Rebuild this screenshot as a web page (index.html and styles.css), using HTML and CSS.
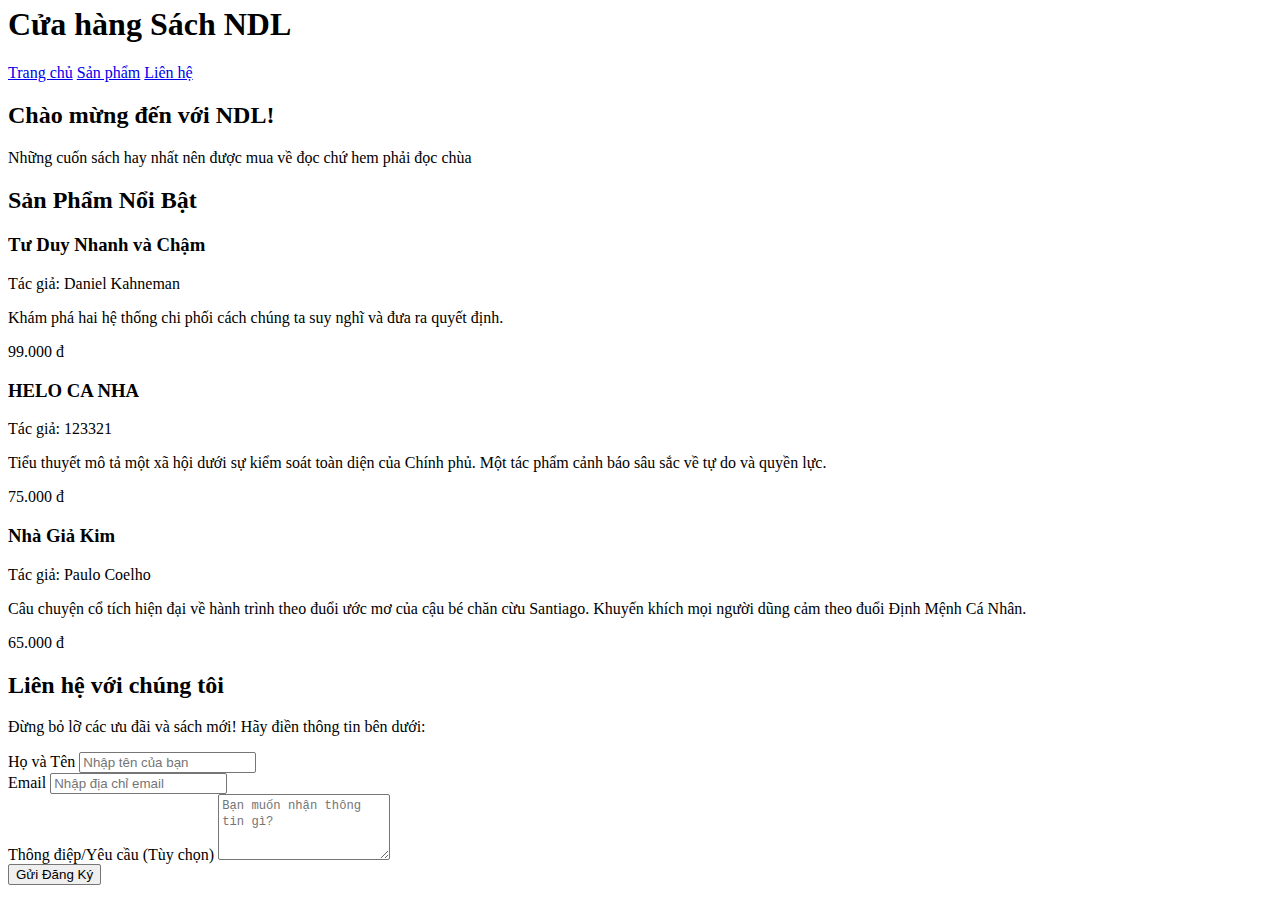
FILE: index.html
```html
<!DOCTYPE html>
<html lang="vi">
<head>
<meta charset="utf-8">
<title>Cửa hàng Sách NDL</title>
<link rel="stylesheet" href="styles.css">
</head>
<body>
<header class="site-header">
  <h1 class="site-title">Cửa hàng Sách NDL</h1>
  <nav class="site-nav">
    <a href="#home">Trang chủ</a>
    <a href="#products">Sản phẩm</a>
    <a href="#contact">Liên hệ</a>
  </nav>
</header>
<main>
  <section id="home">
    <h2>Chào mừng đến với NDL!</h2>
    <p>Những cuốn sách hay nhất nên được mua về đọc chứ hem phải đọc chùa</p>
  </section>
  <section id="products">
    <h2>Sản Phẩm Nổi Bật</h2>
    <article class="book">
      <h3>Tư Duy Nhanh và Chậm</h3>
      <p>Tác giả: Daniel Kahneman</p>
      <p>Khám phá hai hệ thống chi phối cách chúng ta suy nghĩ và đưa ra quyết định.</p>
      <p>99.000 đ</p>
    </article>
    <article class="book">
      <h3>HELO CA NHA</h3>
      <p>Tác giả: 123321</p>
      <p>Tiểu thuyết mô tả một xã hội dưới sự kiểm soát toàn diện của Chính phủ. Một tác phẩm cảnh báo sâu sắc về tự do và quyền lực.</p>
      <p>75.000 đ</p>
    </article>
    <article class="book">
      <h3>Nhà Giả Kim</h3>
      <p>Tác giả: Paulo Coelho</p>
      <p>Câu chuyện cổ tích hiện đại về hành trình theo đuổi ước mơ của cậu bé chăn cừu Santiago. Khuyến khích mọi người dũng cảm theo đuổi Định Mệnh Cá Nhân.</p>
      <p>65.000 đ</p>
    </article>
  </section>
  <section id="contact">
    <h2>Liên hệ với chúng tôi</h2>
    <p>Đừng bỏ lỡ các ưu đãi và sách mới! Hãy điền thông tin bên dưới:</p>
    <form class="contact-form">
      <label for="name">Họ và Tên</label>
      <input class="field" type="text" id="name" placeholder="Nhập tên của bạn"><br>
      <label for="email">Email</label>
      <input class="field" type="email" id="email" placeholder="Nhập địa chỉ email"><br>
      <label for="msg">Thông điệp/Yêu cầu (Tùy chọn)</label>
      <textarea class="message" id="msg" placeholder="Bạn muốn nhận thông tin gì?"></textarea><br>
      <button class="submit" type="submit">Gửi Đăng Ký</button>
    </form>
  </section>
</main>
</body>
</html>
```

FILE: styles.css
```css
html {
  background: #ffffff;
}
body {
  margin: 0 8px 8px 8px;
  font-family: "Liberation Serif", "Times New Roman", serif;
  font-size: 16px;
  color: #000000;
}
.site-header {
  padding-top: 6px;
}
.site-title {
  margin: 0 0 21.44px 0;
  font-size: 32px;
}
.site-nav a {
  color: #0000ee;
}
.field {
  font-family: "Liberation Sans", Arial, sans-serif;
  font-size: 13.33px;
  width: 177px;
  height: 21px;
  box-sizing: border-box;
  padding: 1px 3px;
  border: 1px solid #767676;
  border-radius: 2px;
}
.field::placeholder,
.message::placeholder {
  color: #757575;
}
.message {
  font-family: "Liberation Mono", Consolas, monospace;
  font-size: 12.2px;
  line-height: 16px;
  width: 172px;
  height: 66px;
  box-sizing: border-box;
  padding: 3px 3px 2px 3px;
  border: 1px solid #767676;
  border-radius: 2px;
  vertical-align: baseline;
}
.submit {
  font-family: "Liberation Sans", Arial, sans-serif;
  font-size: 13.33px;
  height: 21px;
  padding: 1px 7px;
  border: 1px solid #767676;
  border-radius: 2px;
  background: #efefef;
  color: #000;
}
```
